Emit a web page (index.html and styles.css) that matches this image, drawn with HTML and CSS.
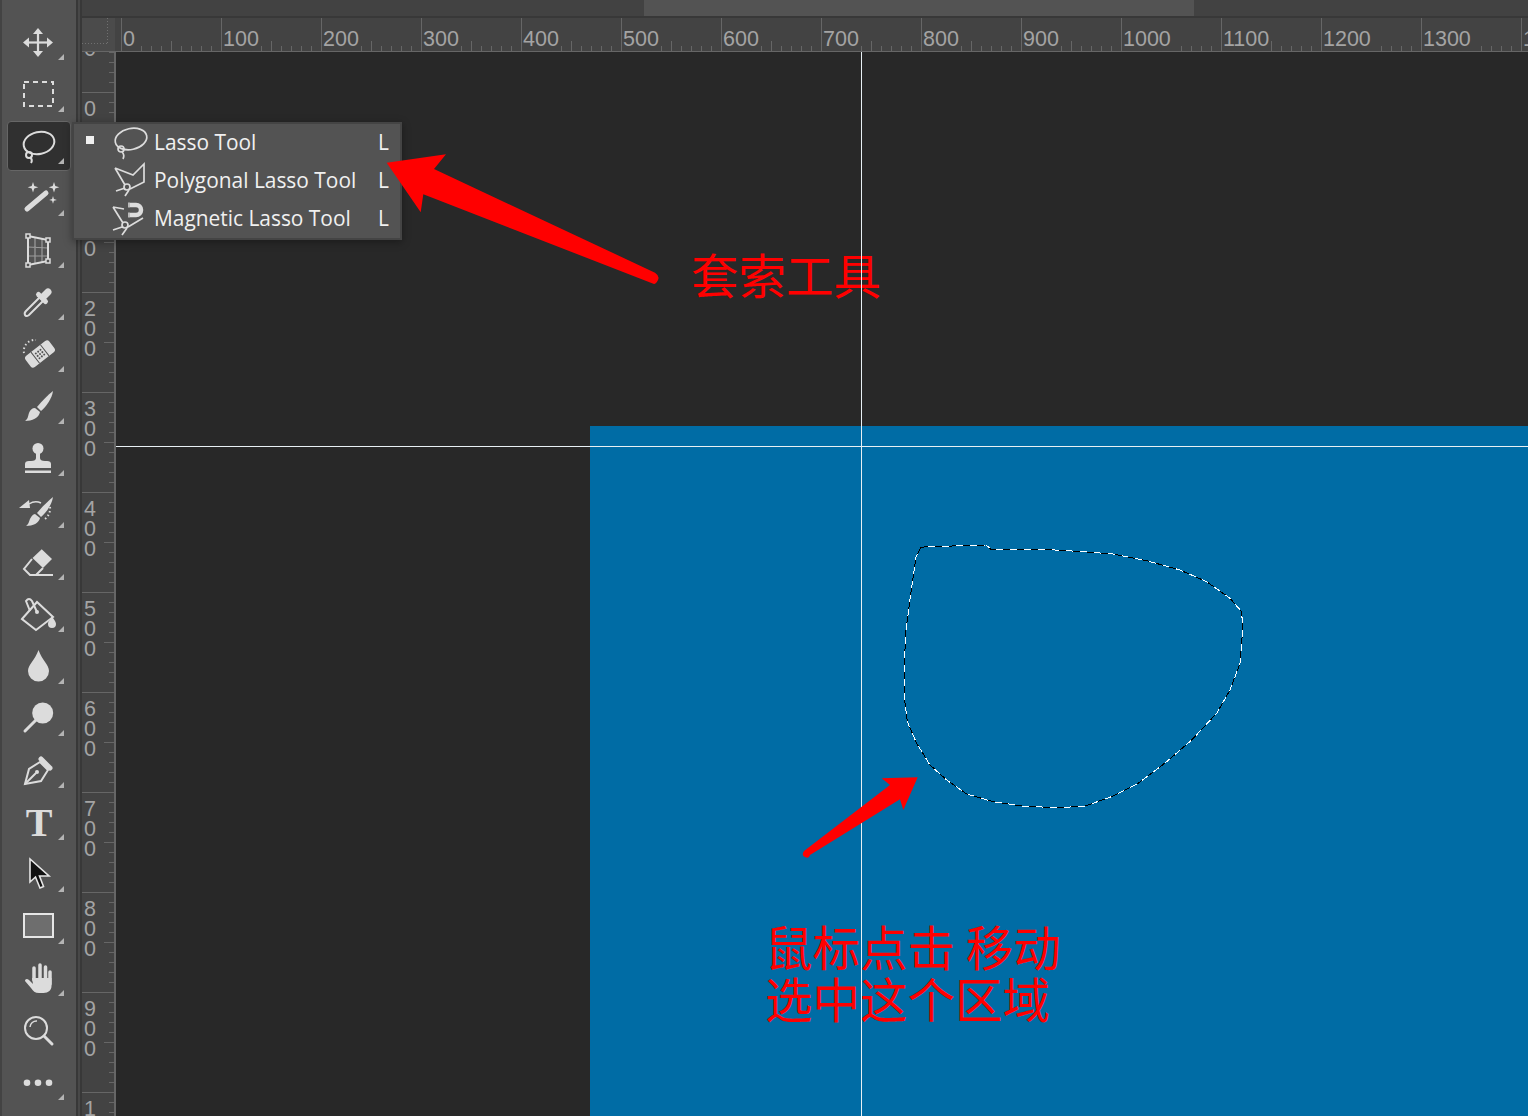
FILE: index.html
```html
<!DOCTYPE html>
<html lang="zh-CN">
<head>
  <meta charset="UTF-8" />
  <title>套索工具</title>
  <link rel="stylesheet" href="styles.css">
</head>
<body>
  <div class="app">

    <!-- left tool strip -->
    <div class="tools">
      <div class="tool"><svg viewBox="0 0 36 36"><g class="solid"><rect x="15.9" y="6" width="2.2" height="25"/><rect x="4.5" y="17.4" width="25" height="2.2"/><path d="M17 4l5 6H12z"/><path d="M17 33l-5-6h10z"/><path d="M2 18.5l6-5v10z"/><path d="M32 18.5l-6 5v-10z"/></g></svg></div>
      <div class="tool"><svg viewBox="0 0 36 36"><rect class="line dash" x="3" y="6" width="29" height="24"/></svg></div>
      <div class="tool active"><svg viewBox="0 0 36 36"><g class="line"><ellipse cx="18" cy="15" rx="15.500" ry="11" transform="rotate(-12 18 15)"/><circle cx="8" cy="27" r="3"/><path d="M9 29q3 3 1 6"/></g></svg></div>
      <div class="tool"><svg viewBox="0 0 36 36"><path class="fat" d="M6 29L25 13"/><g class="solid"><path d="M12 2l1.300 4 4 1.300-4 1.300-1.300 4-1.300-4-4-1.300 4-1.300z"/><path d="M33 2l1.300 4 4 1.300-4 1.300-1.300 4-1.300-4-4-1.300 4-1.300z"/><path d="M32 16l.9 3 3 .9-3 .9-.9 3-.9-3-3-.9 3-.9z"/></g></svg></div>
      <div class="tool"><svg viewBox="0 0 36 36"><path class="thin" d="M14 5v27M21 6v25M7 15l20 1M7 24h20"/><path class="line" d="M7 4l20 4v21L7 33z"/><g class="handle"><rect x="5" y="2" width="4" height="4"/><rect x="25" y="6" width="4" height="4"/><rect x="25" y="27" width="4" height="4"/><rect x="5" y="31" width="4" height="4"/></g></svg></div>
      <div class="tool"><svg viewBox="0 0 36 36"><path class="line" d="M19 13L5 27q-2 2-1 4t4 0l14-14"/><path class="fat thick" d="M22 13l5-5"/><path class="fat" d="M17.500 10.500l7 7"/></svg></div>
      <div class="tool"><svg viewBox="0 0 36 36"><path class="line dots" d="M3 17A11 11 0 0 1 15 4"/><g transform="rotate(-38 19 18)"><rect class="solid" x="4" y="11" width="30" height="14" rx="3"/><path class="cut" d="M13 11v14M25 11v14"/><g class="pips"><circle cx="16" cy="15" r="1"/><circle cx="19" cy="15" r="1"/><circle cx="22" cy="15" r="1"/><circle cx="16" cy="18" r="1"/><circle cx="19" cy="18" r="1"/><circle cx="22" cy="18" r="1"/><circle cx="16" cy="21" r="1"/><circle cx="19" cy="21" r="1"/><circle cx="22" cy="21" r="1"/></g></g></svg></div>
      <div class="tool"><svg viewBox="0 0 36 36"><g class="solid"><path d="M32 3c-1 7-6 15-12 20l-4-4C21 13 27 7 32 3z"/><path d="M14 20l5 4c-1 6-8 9-15 9 3-2 3-5 4-8s3-5 6-5z"/></g></svg></div>
      <div class="tool"><svg viewBox="0 0 36 36"><g class="solid"><circle cx="17" cy="8.500" r="5.500"/><path d="M15 12h4v6q0 3 5 3h2q4 0 4 3v4H4v-4q0-3 4-3h2q5 0 5-3z"/><rect x="4" y="30.500" width="26" height="2.500"/></g></svg></div>
      <div class="tool"><svg viewBox="0 0 36 36"><g class="solid"><path d="M32 5c-1 7-6 15-12 20l-4-4C21 15 27 9 32 5z"/><path d="M14 22l5 4c-1 5-7 8-14 8 3-2 3-5 4-7s3-5 5-5z"/><path d="M-2 16L8 8l1 8z"/></g><path class="thin bright" d="M8 12q6-4 12-1"/><path class="line dots" d="M29 15q1 7-6 13"/></svg></div>
      <div class="tool"><svg viewBox="0 0 36 36"><path class="solid" d="M20.700 5.300L31 15 22 24 11.500 14z"/><path class="line" d="M11 15L3 25l6 6h6l7-7"/><path class="line" d="M14 31h18"/></svg></div>
      <div class="tool"><svg viewBox="0 0 36 36"><path class="line" d="M1 23L16 6l16 15-17 13z"/><path class="line" d="M9 15L5 5q3-4 6 0l5 11"/><circle class="solid" cx="16" cy="16" r="2"/><path class="solid" d="M31 20c1 3 4 5 4 8a4 4 0 0 1-8 0c0-3 3-4 4-8z"/></svg></div>
      <div class="tool"><svg viewBox="0 0 36 36"><path class="solid" d="M17.500 2C14 12 7 17 7 23a10.500 10.500 0 0 0 21 0C28 17 21 12 17.500 2z"/></svg></div>
      <div class="tool"><svg viewBox="0 0 36 36"><circle class="solid" cx="21.700" cy="13" r="10.500"/><path class="fat slim" d="M4 31L15 20"/></svg></div>
      <div class="tool"><svg viewBox="0 0 36 36"><path class="line" d="M4 32L8 17 19 10l8 8-7 11z"/><path class="fat" d="M20 7l9 9"/><path class="line" d="M4 32l11-11"/><circle class="solid" cx="16" cy="20" r="2"/></svg></div>
      <div class="tool"><svg viewBox="0 0 36 36"><text class="type" x="18" y="32">T</text></svg></div>
      <div class="tool"><svg viewBox="0 0 36 36"><path class="pointer" d="M9 3v23l5.500-5 4.500 11 3.500-1.500-4-10.500H28z"/></svg></div>
      <div class="tool"><svg viewBox="0 0 36 36"><rect class="shape" x="3" y="6" width="29" height="23"/></svg></div>
      <div class="tool"><svg viewBox="0 0 36 36"><path class="fat slim round" d="M13 20V8M19 19V5M24.500 19V7M29 24V12"/><path class="solid" d="M11 18h19.500v8c0 4-3 7-8 7H18c-4 0-6-2-8-5l-6-7c0-2 2-3 4-1l4 4z"/></svg></div>
      <div class="tool plain"><svg viewBox="0 0 36 36"><circle class="line" cx="15" cy="16" r="11"/><path class="thin bright" d="M9 15a6.500 6.500 0 0 1 7-6"/><path class="fat slim" d="M23 24l8 8"/></svg></div>
      <div class="tool"><svg viewBox="0 0 36 36"><g class="solid"><circle cx="6" cy="18.700" r="3.300"/><circle cx="17" cy="18.700" r="3.300"/><circle cx="28" cy="18.700" r="3.300"/></g></svg></div>
    </div>

    <div class="gutter"></div>

    <div class="main">
      <div class="tabs">
        <div class="tab"></div>
        <div class="tab current"></div>
        <div class="tab"></div>
      </div>

      <div class="hruler">
        <div class="corner"></div>
        <div class="hticks">
          <div class="hseg"><span>0</span></div>
          <div class="hseg"><span>100</span></div>
          <div class="hseg"><span>200</span></div>
          <div class="hseg"><span>300</span></div>
          <div class="hseg"><span>400</span></div>
          <div class="hseg"><span>500</span></div>
          <div class="hseg"><span>600</span></div>
          <div class="hseg"><span>700</span></div>
          <div class="hseg"><span>800</span></div>
          <div class="hseg"><span>900</span></div>
          <div class="hseg"><span>1000</span></div>
          <div class="hseg"><span>1100</span></div>
          <div class="hseg"><span>1200</span></div>
          <div class="hseg"><span>1300</span></div>
          <div class="hseg"><span>1400</span></div>
        </div>
      </div>

      <div class="work">
        <div class="vruler">
          <div class="vseg first">1<br>0<br>0</div>
          <div class="vseg">0</div>
          <div class="vseg">1<br>0<br>0</div>
          <div class="vseg">2<br>0<br>0</div>
          <div class="vseg">3<br>0<br>0</div>
          <div class="vseg">4<br>0<br>0</div>
          <div class="vseg">5<br>0<br>0</div>
          <div class="vseg">6<br>0<br>0</div>
          <div class="vseg">7<br>0<br>0</div>
          <div class="vseg">8<br>0<br>0</div>
          <div class="vseg">9<br>0<br>0</div>
          <div class="vseg">1<br>0<br>0<br>0</div>
        </div>

        <div class="canvas">
          <div class="doc"></div>
          <div class="note note-lasso">套索工具</div>
          <div class="note note-select">鼠标点击 移动<br>选中这个区域</div>
          <div class="guide-v"></div>
          <div class="guide-h"></div>
        </div>
      </div>
    </div>

    <!-- lasso flyout -->
    <div class="flyout">
      <div class="fly-row">
        <span class="bullet"></span>
        <svg viewBox="0 0 36 36"><g class="line"><ellipse cx="19" cy="14" rx="16" ry="10.500" transform="rotate(-12 19 14)"/><circle cx="9" cy="24" r="3"/><path d="M10 27q3 3 1 7"/></g></svg>
        <span class="fly-name">Lasso Tool</span>
        <span class="fly-key">L</span>
      </div>
      <div class="fly-row">
        <span class="bullet off"></span>
        <svg viewBox="0 0 36 36"><g class="line"><path d="M3 5l18 7L32 1v18L18 26M3 5l10 17"/><circle cx="15" cy="24" r="3"/><path d="M4 28l9-3M13 33l4-6"/></g></svg>
        <span class="fly-name">Polygonal Lasso Tool</span>
        <span class="fly-key">L</span>
      </div>
      <div class="fly-row">
        <span class="bullet off"></span>
        <svg viewBox="0 0 36 36"><g class="line"><path d="M1 6l11 2M1 6l10 16M16 26l15-9"/><circle cx="13" cy="24" r="3"/><path d="M1 29l9-3M10 34l5-7"/></g><path class="magnet" d="M18 4h6a5 5 0 0 1 0 10h-6"/><path class="thin bright" d="M17 1.500v5M17 11.500v5"/></svg>
        <span class="fly-name">Magnetic Lasso Tool</span>
        <span class="fly-key">L</span>
      </div>
    </div>

    <!-- marks drawn over the screenshot -->
    <svg class="marks" viewBox="0 0 1528 1116">
      <g class="selection">
        <polygon class="ants-w" points="920.700,547.300 927.700,546.700 963.300,545.700 986,545 991,549.300 1043.300,549.300 1083.300,551.700 1113.300,554 1146.700,560.700 1180,570 1206.700,581.700 1230,598.300 1241.700,611.700 1242.700,630 1240,663.300 1230,690 1216.700,713.300 1191.700,740 1166.700,761.700 1138.300,783.300 1113.300,796 1083.300,806.700 1056.700,807.300 1026.700,806.700 993.300,801.700 966.700,794 946.700,780 930,765 916.700,743.300 907.300,721.700 905,703.300 904.300,663.300 906,630 911.700,586.700 916,556.700"/>
        <polygon class="ants-k" points="920.700,547.300 927.700,546.700 963.300,545.700 986,545 991,549.300 1043.300,549.300 1083.300,551.700 1113.300,554 1146.700,560.700 1180,570 1206.700,581.700 1230,598.300 1241.700,611.700 1242.700,630 1240,663.300 1230,690 1216.700,713.300 1191.700,740 1166.700,761.700 1138.300,783.300 1113.300,796 1083.300,806.700 1056.700,807.300 1026.700,806.700 993.300,801.700 966.700,794 946.700,780 930,765 916.700,743.300 907.300,721.700 905,703.300 904.300,663.300 906,630 911.700,586.700 916,556.700"/>
      </g>
      <path class="arrow" d="M386.700 162.700L446 154.300 434 169 655 272.700Q660 276 658 280T654 284L423.300 194.300 420.700 212.300Z"/>
      <path class="arrow" d="M917.700 777.300L881.700 778.300 890 785 804 851Q801 855 805 857T810 855L900 799.300 903.300 810Z"/>
    </svg>
  </div>
</body>
</html>
```

FILE: styles.css
```css
* {
  margin: 0; padding: 0; box-sizing: border-box;
}

html, body {
  height: 100%;
  overflow: hidden;
  background: #282828;
  font-family: "Liberation Sans", Arial, sans-serif;
}

.app {
  position: relative;
  display: flex;
  height: 1116px;
  overflow: hidden;
}

/* tool strip */
.tools {
  width: 76px;
  flex-shrink: 0;
  padding-top: 17px;
  background: #535353;
  border-left: 2px solid #434343;
}

.tool {
  position: relative;
  display: flex;
  align-items: center;
  justify-content: center;
  width: 64px;
  height: 50px;
  margin: 0 0 2px 5px;
  border: 1px solid transparent;
  border-radius: 4px;
}

.tool svg {
  width: 36px;
  height: 36px;
  overflow: visible;
}

.tool::after {
  content: "";
  position: absolute;
  left: 50px;
  top: 36px;
  width: 6px;
  height: 6px;
  background: #b4b4b4;
  clip-path: polygon(100% 0, 100% 100%, 0 100%);
}

.tool.plain::after {
  display: none;
}

.tool.active {
  background: #303030;
  border-color: #666666;
}

.solid { fill: #dcdcdc; }

.line {
  fill: none;
  stroke: #dcdcdc;
  stroke-width: 2;
}

.dash { stroke-dasharray: 5 4; }
.dots { stroke-dasharray: 1.5 2.5; }

.fat {
  fill: none;
  stroke: #dcdcdc;
  stroke-width: 5;
  stroke-linecap: round;
}

.thick { stroke-width: 7; }
.slim { stroke-width: 3; }
.round { stroke-width: 3.5; }

.thin {
  fill: none;
  stroke: #9c9c9c;
  stroke-width: 1.2;
}

.bright { stroke: #dcdcdc; stroke-width: 1.5; }

.handle rect {
  fill: #535353;
  stroke: #dcdcdc;
  stroke-width: 1.5;
}

.cut {
  stroke: #535353;
  stroke-width: 1;
}

.pips { fill: #535353; }

.type {
  font-family: "Liberation Serif", serif;
  font-size: 40px;
  font-weight: bold;
  text-anchor: middle;
  fill: #dcdcdc;
}

.pointer {
  fill: #111111;
  stroke: #e6e6e6;
  stroke-width: 1.6;
}

.shape {
  fill: #6e6e6e;
  stroke: #e6e6e6;
  stroke-width: 2;
}

.gutter {
  width: 6px;
  flex-shrink: 0;
  background: #484848;
  border-left: 2px solid #383838;
  border-right: 2px solid #383838;
}

/* tabs + rulers */
.main {
  flex: 1;
  min-width: 0;
  display: flex;
  flex-direction: column;
}

.tabs {
  display: flex;
  height: 18px;
  flex-shrink: 0;
  overflow: hidden;
  background: #424242;
  border-bottom: 2px solid #383838;
}

.tab {
  width: 562px;
  flex-shrink: 0;
}

.tab.current {
  width: 550px;
  background: #535353;
}

.hruler {
  display: flex;
  height: 34px;
  flex-shrink: 0;
  background: #434343;
  border-bottom: 1px solid #666666;
}

.corner {
  width: 33px;
  height: 33px;
  flex-shrink: 0;
  margin-right: 1px;
  background: #4b4b4b;
  background-image:
    repeating-linear-gradient(to bottom, #707070 0 1px, transparent 1px 3px),
    repeating-linear-gradient(to right, #707070 0 1px, transparent 1px 3px);
  background-size: 1px 25px, 25px 1px;
  background-position: 25px 0, 0 25px;
  background-repeat: no-repeat;
}

.hticks {
  display: flex;
  min-width: 0;
  padding-left: 5px;
  overflow: hidden;
}

.hseg {
  width: 100px;
  flex-shrink: 0;
  height: 33px;
  border-left: 1px solid #666666;
  background-image:
    linear-gradient(#666666, #666666),
    linear-gradient(to right, #666666 1px, transparent 1px);
  background-size: 1px 10px, 10px 5px;
  background-position: 49px bottom, -1px bottom;
  background-repeat: no-repeat, repeat-x;
}

.hseg span {
  display: inline-block;
  height: 33px;
  padding: 0 2px 0 1px;
  background: #434343;
  color: #a4a4a4;
  font-size: 21.500px;
  line-height: 42px;
}

.work {
  flex: 1;
  display: flex;
  min-height: 0;
}

.vruler {
  width: 34px;
  flex-shrink: 0;
  overflow: hidden;
  background: #434343;
  border-right: 2px solid #666666;
}

.vseg {
  height: 100px;
  padding: 6px 0 0 2px;
  border-top: 1px solid #666666;
  color: #a4a4a4;
  font-size: 21.500px;
  line-height: 20px;
  overflow: hidden;
  background-image:
    linear-gradient(#666666, #666666),
    linear-gradient(to bottom, #666666 1px, transparent 1px);
  background-size: 10px 1px, 5px 10px;
  background-position: right 49px, right -1px;
  background-repeat: no-repeat, repeat-y;
}

.vseg.first { margin-top: -60px; }

/* document area */
.canvas {
  position: relative;
  flex: 1;
  background: #282828;
  overflow: hidden;
}

.doc {
  position: absolute;
  left: 474px;
  top: 374px;
  right: 0;
  bottom: 0;
  background: #006ca5;
}

.guide-v {
  position: absolute;
  left: 745px;
  top: 0;
  bottom: 0;
  width: 1px;
  background: #e8f0f4;
}

.guide-h {
  position: absolute;
  left: 0;
  right: 0;
  top: 394px;
  height: 1px;
  background: #e8f0f4;
}

.note {
  position: absolute;
  color: #ff0000;
  font-family: "Noto Sans CJK SC", sans-serif;
  font-size: 47.500px;
  line-height: 52px;
  white-space: nowrap;
}

.note-lasso { left: 575px; top: 196px; }
.note-select { left: 649px; top: 868px; }

/* flyout menu */
.flyout {
  position: absolute;
  left: 72px;
  top: 122px;
  width: 330px;
  height: 118px;
  background: #535353;
  border: 2px solid #444444;
  box-shadow: 0 2px 8px rgba(0, 0, 0, 0.35);
}

.fly-row {
  display: flex;
  align-items: center;
  height: 38px;
  color: #f0f0f0;
  font-family: "Open Sans", sans-serif;
  font-size: 20.900px;
}

.fly-row svg {
  width: 36px;
  height: 36px;
  margin: 0 6px 0 18px;
  overflow: visible;
}

.fly-row .line { stroke-width: 1.7; stroke: #dcdcdc; }

.magnet {
  fill: none;
  stroke: #dcdcdc;
  stroke-width: 4.500;
}

.bullet {
  width: 8px;
  height: 8px;
  margin: -6px 0 0 12px;
  background: #f0f0f0;
}

.bullet.off { background: transparent; }

.fly-name {
  flex: 1;
  margin-top: -2px;
}

.fly-key {
  margin: -2px 11px 0 0;
}

/* drawn marks */
.marks {
  position: absolute;
  left: 0;
  top: 0;
  width: 1528px;
  height: 1116px;
  pointer-events: none;
}

.arrow { fill: #ff0000; }

.ants-w, .ants-k {
  fill: none;
  stroke-width: 1;
  shape-rendering: crispEdges;
}

.ants-w { stroke: #ffffff; }

.ants-k {
  stroke: #000000;
  stroke-dasharray: 7 7;
}
```
